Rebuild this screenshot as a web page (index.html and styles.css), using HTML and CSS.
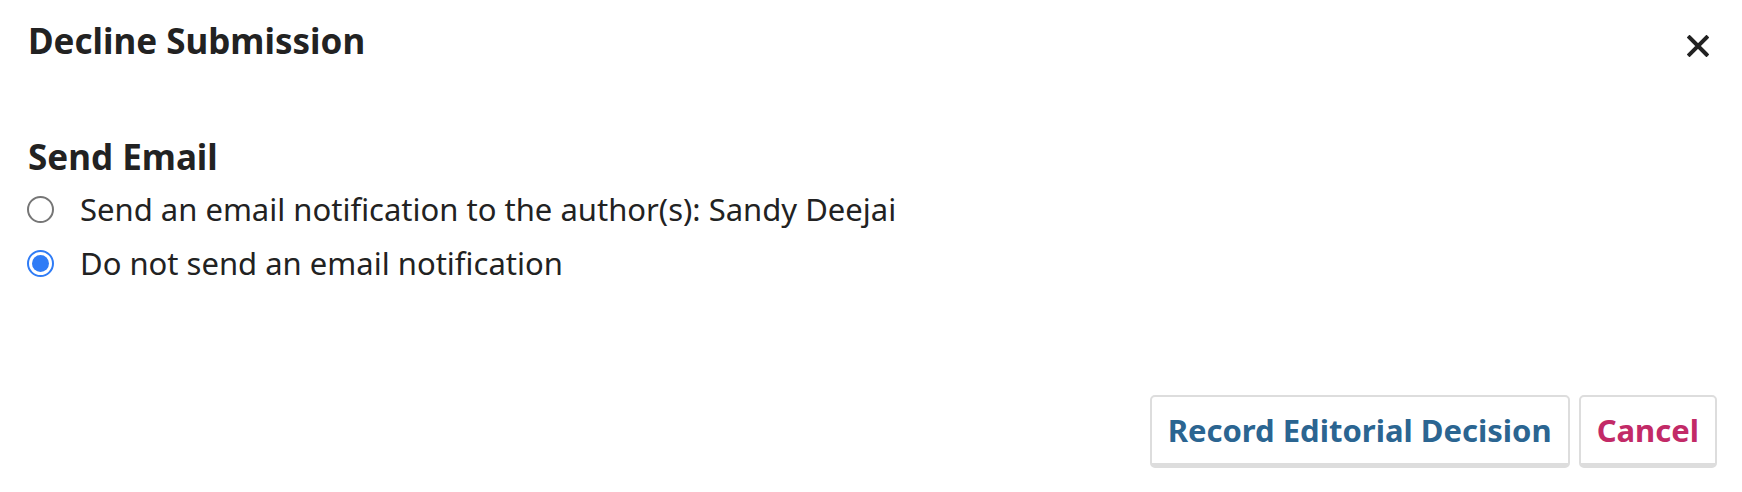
FILE: index.html
```html
<!DOCTYPE html>
<html>
<head>
<meta charset="utf-8">
<link rel="stylesheet" href="styles.css">
</head>
<body>
<div class="modal">
  <div class="modal-header">
    <h1 class="modal-title">Decline Submission</h1>
    <button class="close" aria-label="Close">
      <svg width="22" height="22" viewBox="0 0 22 22"><path d="M2.5 2.5 L19.5 19.5 M19.5 2.5 L2.5 19.5" stroke="#222" stroke-width="4" stroke-linecap="square"/></svg>
    </button>
  </div>
  <div class="modal-body">
    <h2 class="section-title">Send Email</h2>
    <label class="radio-row"><span class="radio"></span><span>Send an email notification to the author(s): Sandy Deejai</span></label>
    <label class="radio-row"><span class="radio checked"></span><span>Do not send an email notification</span></label>
  </div>
  <div class="modal-footer">
    <button class="btn btn-primary">Record Editorial Decision</button>
    <button class="btn btn-cancel">Cancel</button>
  </div>
</div>
</body>
</html>
```

FILE: styles.css
```css
html, body {
  margin: 0;
  padding: 0;
  background: #fff;
}
body {
  font-family: "Noto Sans", "Open Sans", sans-serif;
  color: #222;
}
.modal {
  width: 1742px;
  height: 492px;
  display: flex;
  flex-direction: column;
  box-sizing: border-box;
}
.modal-header {
  display: flex;
  align-items: flex-start;
  justify-content: space-between;
  padding: 21px 33px 0 28px;
}
.modal-title {
  margin: 0;
  font-size: 35px;
  font-weight: 700;
  line-height: 40px;
}
.close {
  border: 0;
  background: none;
  padding: 0;
  width: 22px;
  height: 22px;
  margin-top: 14px;
}
.close svg { display: block; }
.modal-body {
  padding: 76px 28px 0 27px;
}
.section-title {
  margin: 0 0 5px 1px;
  font-size: 35px;
  font-weight: 700;
  line-height: 40px;
}
.radio-row {
  display: flex;
  align-items: center;
  gap: 26px;
  font-size: 31px;
  line-height: 54px;
  height: 54px;
}
.radio {
  width: 23px;
  height: 23px;
  border: 2px solid #767676;
  border-radius: 50%;
  box-sizing: content-box;
  position: relative;
  flex: none;
}
.radio.checked {
  border-color: #2f7cf6;
}
.radio.checked::after {
  content: "";
  position: absolute;
  left: 3px;
  top: 3px;
  width: 17px;
  height: 17px;
  border-radius: 50%;
  background: #2f7cf6;
}
.modal-footer {
  margin-top: auto;
  display: flex;
  justify-content: flex-end;
  gap: 9px;
  padding: 0 25px 24px 0;
}
.btn {
  font-family: "Noto Sans", "Open Sans", sans-serif;
  font-size: 31px;
  font-weight: 700;
  background: #fff;
  border: 2px solid #ddd;
  border-bottom-width: 5px;
  border-radius: 5px;
  height: 73px;
  padding: 0 16px;
  box-sizing: border-box;
}
.btn-primary { color: #2b6591; }
.btn-cancel { color: #c22a67; }
```
